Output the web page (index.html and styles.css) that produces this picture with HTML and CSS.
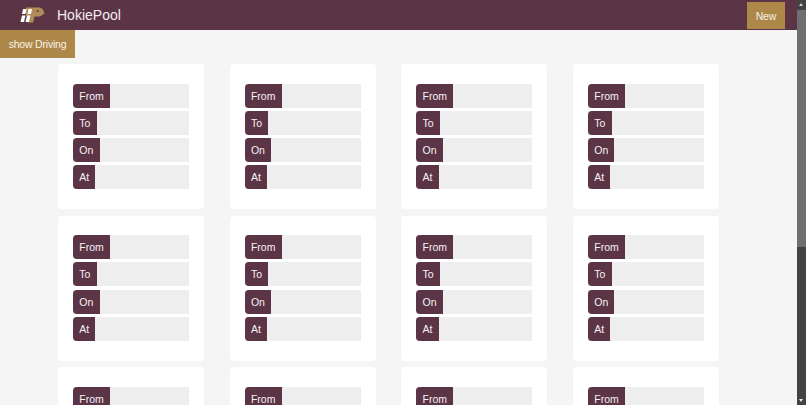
FILE: index.html
```
<!DOCTYPE html>
<html lang="en">
<head>
<meta charset="utf-8">
<title>HokiePool</title>
<link rel="stylesheet" href="styles.css">
</head>
<body>
<header class="topbar">
  <div class="brand">
    <svg class="logo" viewBox="0 0 24 16" width="24" height="16" aria-hidden="true">
      <path class="logo-t" d="M5 .5h12.500c3 0 4.500 1.500 5 3.500l1 2.500-4.500 3h-5.500l-1.500 6H7l1.500-6.500H5z"/>
      <path class="logo-w" d="M2 2h3.500L4.500 7H1zM7.500 2H11l-1 5H6.500zM1 8.500h3.500L3 15H-.5zM6 8.500h3.500L8 15H4.500z"/>
      <circle class="logo-d" cx="16.700" cy="4" r="1.100"/>
    </svg>
    <span class="brand-name">HokiePool</span>
  </div>
  <button class="new-btn">New</button>
</header>
<button class="toggle-btn">show Driving</button>
<main class="grid">
  <section class="card"><div class="row"><span class="tag">From</span></div><div class="row"><span class="tag">To</span></div><div class="row"><span class="tag">On</span></div><div class="row"><span class="tag">At</span></div></section>
  <section class="card"><div class="row"><span class="tag">From</span></div><div class="row"><span class="tag">To</span></div><div class="row"><span class="tag">On</span></div><div class="row"><span class="tag">At</span></div></section>
  <section class="card"><div class="row"><span class="tag">From</span></div><div class="row"><span class="tag">To</span></div><div class="row"><span class="tag">On</span></div><div class="row"><span class="tag">At</span></div></section>
  <section class="card"><div class="row"><span class="tag">From</span></div><div class="row"><span class="tag">To</span></div><div class="row"><span class="tag">On</span></div><div class="row"><span class="tag">At</span></div></section>
  <section class="card"><div class="row"><span class="tag">From</span></div><div class="row"><span class="tag">To</span></div><div class="row"><span class="tag">On</span></div><div class="row"><span class="tag">At</span></div></section>
  <section class="card"><div class="row"><span class="tag">From</span></div><div class="row"><span class="tag">To</span></div><div class="row"><span class="tag">On</span></div><div class="row"><span class="tag">At</span></div></section>
  <section class="card"><div class="row"><span class="tag">From</span></div><div class="row"><span class="tag">To</span></div><div class="row"><span class="tag">On</span></div><div class="row"><span class="tag">At</span></div></section>
  <section class="card"><div class="row"><span class="tag">From</span></div><div class="row"><span class="tag">To</span></div><div class="row"><span class="tag">On</span></div><div class="row"><span class="tag">At</span></div></section>
  <section class="card"><div class="row"><span class="tag">From</span></div><div class="row"><span class="tag">To</span></div><div class="row"><span class="tag">On</span></div><div class="row"><span class="tag">At</span></div></section>
  <section class="card"><div class="row"><span class="tag">From</span></div><div class="row"><span class="tag">To</span></div><div class="row"><span class="tag">On</span></div><div class="row"><span class="tag">At</span></div></section>
  <section class="card"><div class="row"><span class="tag">From</span></div><div class="row"><span class="tag">To</span></div><div class="row"><span class="tag">On</span></div><div class="row"><span class="tag">At</span></div></section>
  <section class="card"><div class="row"><span class="tag">From</span></div><div class="row"><span class="tag">To</span></div><div class="row"><span class="tag">On</span></div><div class="row"><span class="tag">At</span></div></section>
</main>
<div class="scrollbar"><div class="scroll-arrow up"></div><div class="scroll-thumb"></div><div class="scroll-arrow down"></div></div>
</body>
</html>
```
FILE: styles.css
```
* { box-sizing: border-box; }
html, body { margin: 0; height: 405px; overflow: hidden; }
body { background: #f5f5f5; font-family: "Liberation Sans", Arial, sans-serif; color: #fff; }
.topbar { height: 30px; background: #5b3446; display: flex; align-items: stretch; justify-content: space-between; padding-right: 21px; }
.brand { display: flex; align-items: center; padding-left: 21px; gap: 12px; }
.logo { overflow: visible; }
.logo-w { fill: #fff; }
.logo-t { fill: #b08d57; }
.logo-d { fill: #5b3446; }
.brand-name { font-size: 14px; color: #f3edf0; }
.new-btn { width: 38px; height: 27px; margin-top: 2px; background: #ad8849; border: 0; padding: 0; color: #f7f2e8; font: 10.500px "Liberation Sans", Arial, sans-serif; letter-spacing: -0.100px; }
.toggle-btn { display: block; width: 75px; height: 27.500px; background: #ad8849; border: 0; padding: 0; color: #f7f2e8; font: 10.500px "Liberation Sans", Arial, sans-serif; letter-spacing: -0.200px; }
.grid { display: grid; grid-template-columns: repeat(4, 146px); column-gap: 25.670px; row-gap: 6.330px; padding: 6.500px 0 0 58px; }
.card { height: 145.330px; background: #fff; border-radius: 4px; padding: 19.500px 15px 0; display: flex; flex-direction: column; gap: 3.330px; }
.row { height: 24px; flex: none; background: #eeeeee; display: flex; }
.tag { background: #5b3446; color: #f7f2f4; font-size: 10.500px; line-height: 24px; padding: 0 6.250px; border-radius: 4px 0 0 4px; }
.scrollbar { position: fixed; top: 0; right: 0; width: 9px; height: 405px; background: #434343; display: flex; flex-direction: column; }
.scroll-arrow { height: 10px; flex: none; position: relative; }
.scroll-arrow::after { content: ""; position: absolute; left: 2px; top: 3px; border-left: 2.500px solid transparent; border-right: 2.500px solid transparent; }
.up::after { border-bottom: 3px solid #cfcfcf; }
.down { margin-top: auto; }
.down::after { border-top: 3px solid #e8e8e8; top: 4px; }
.scroll-thumb { height: 237px; flex: none; background: #6f6f6f; }
```
